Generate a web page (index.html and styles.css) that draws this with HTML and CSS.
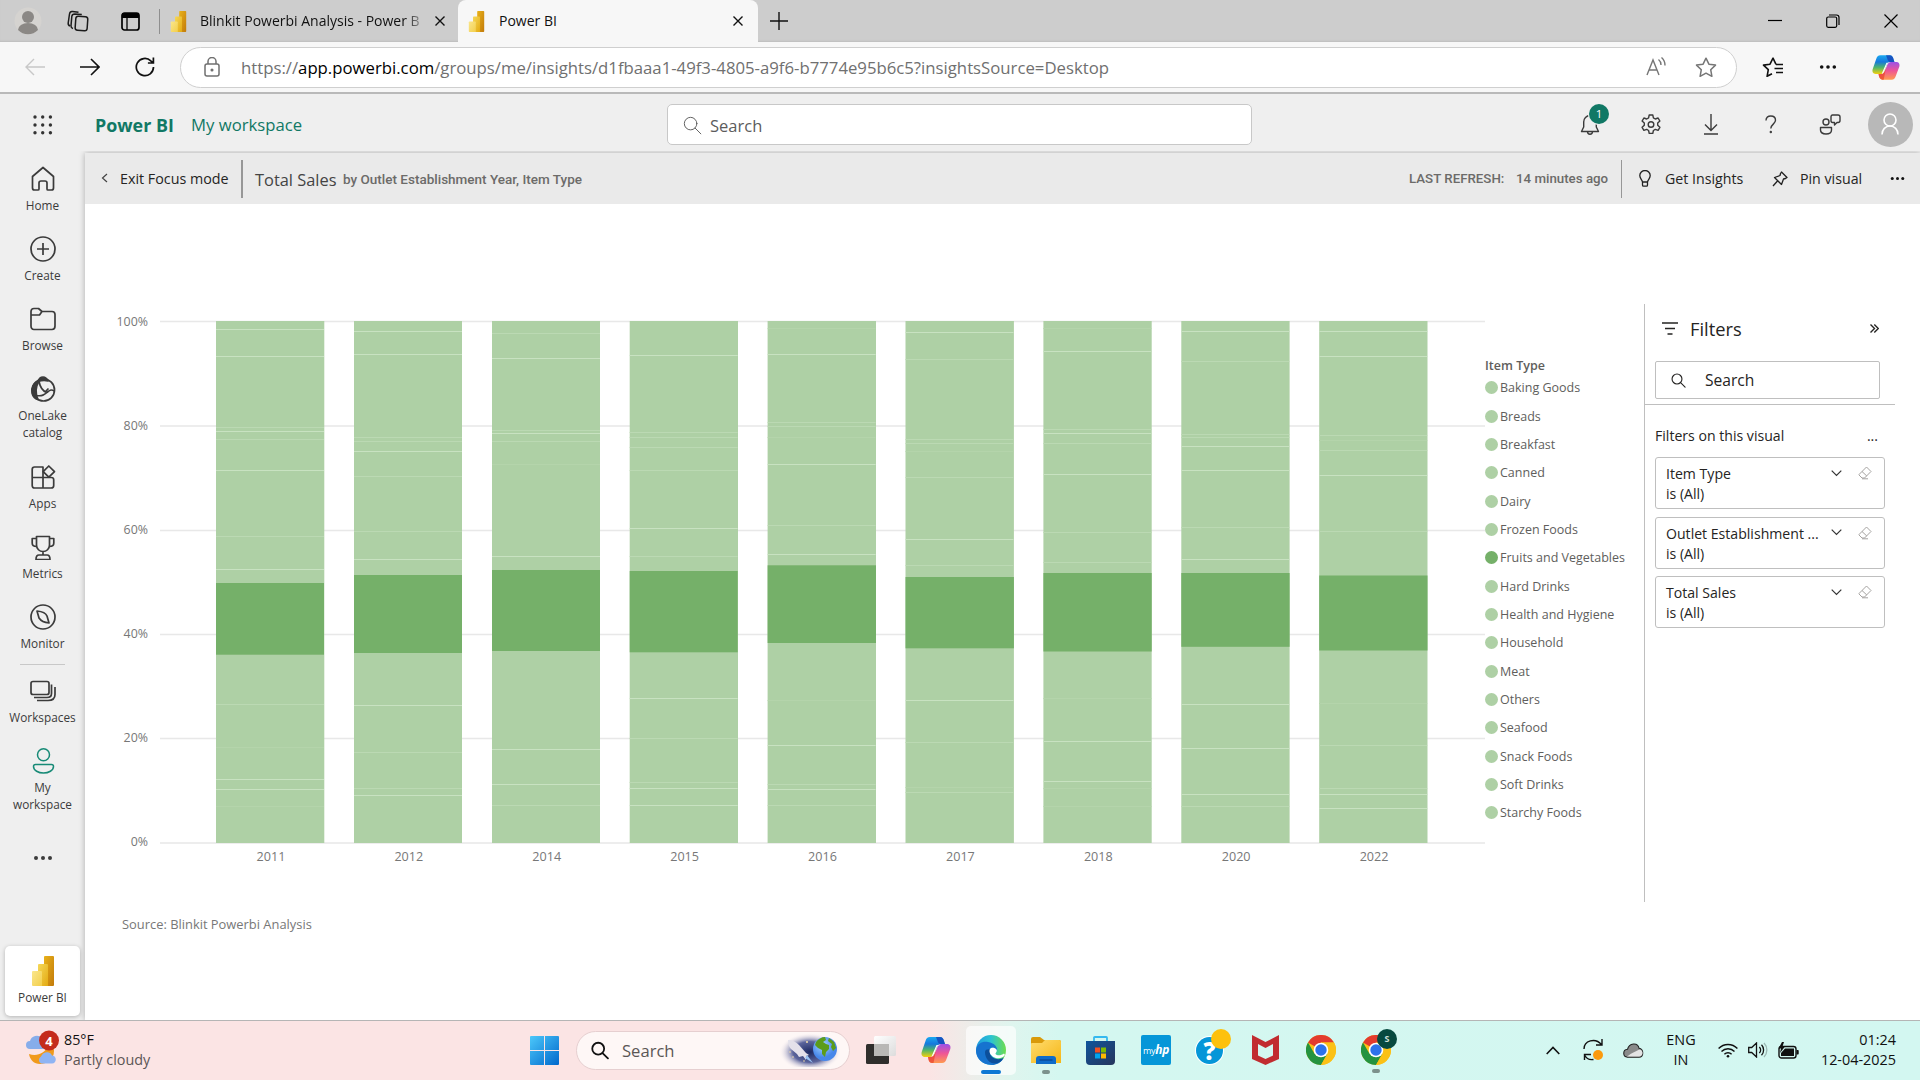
FILE: index.html
```html
<!DOCTYPE html>
<html lang="en">
<head>
<meta charset="utf-8">
<title>Power BI</title>
<link rel="stylesheet" href="styles.css">
</head>
<body>
<svg class="defs" width="0" height="0" aria-hidden="true">
  <defs>
    <linearGradient id="pb1" x1="0" y1="0" x2="1" y2="1"><stop offset="0" stop-color="#e9b21a"/><stop offset="1" stop-color="#c27a0a"/></linearGradient>
    <linearGradient id="pb2" x1="0" y1="0" x2="1" y2="1"><stop offset="0" stop-color="#f6d858"/><stop offset="1" stop-color="#e3aa12"/></linearGradient>
    <linearGradient id="pb3" x1="0" y1="0" x2="1" y2="1"><stop offset="0" stop-color="#fae68c"/><stop offset="1" stop-color="#f3cf4c"/></linearGradient>
    <linearGradient id="cpA" x1="0" y1="0" x2="0" y2="1"><stop offset="0" stop-color="#1ba9f0"/><stop offset=".35" stop-color="#1678dc"/><stop offset=".65" stop-color="#4fb56a"/><stop offset="1" stop-color="#f5d00c"/></linearGradient>
    <linearGradient id="cpB" x1="0" y1="0" x2="0" y2="1"><stop offset="0" stop-color="#9a50e8"/><stop offset=".5" stop-color="#ef5596"/><stop offset="1" stop-color="#ff9a50"/></linearGradient>
    <linearGradient id="edA" x1="0" y1="0" x2="1" y2="0"><stop offset="0" stop-color="#1f9be0"/><stop offset=".5" stop-color="#2bc3d2"/><stop offset="1" stop-color="#6ddd4e"/></linearGradient>
    <linearGradient id="winG" x1="0" y1="0" x2="1" y2="1"><stop offset="0" stop-color="#4cc8fa"/><stop offset="1" stop-color="#0068cc"/></linearGradient>
    <linearGradient id="foG" x1="0" y1="0" x2="1" y2="1"><stop offset="0" stop-color="#ffdc6e"/><stop offset="1" stop-color="#f5b616"/></linearGradient>
    <linearGradient id="stG" x1="0" y1="0" x2="1" y2="1"><stop offset="0" stop-color="#0f559c"/><stop offset="1" stop-color="#27355c"/></linearGradient>
    <linearGradient id="tvG" x1="0" y1="0" x2="1" y2="1"><stop offset="0" stop-color="#fff"/><stop offset="1" stop-color="#dcdcdc"/></linearGradient>
    <radialGradient id="spG"><stop offset="0" stop-color="#1d2a63"/><stop offset=".55" stop-color="#5c659c"/><stop offset="1" stop-color="#fff6f6" stop-opacity="0"/></radialGradient>
    <radialGradient id="earth" cx=".4" cy=".35"><stop offset="0" stop-color="#a9d8ff"/><stop offset="1" stop-color="#4787ea"/></radialGradient>
    <symbol id="pbi" viewBox="0 0 22 30"><path fill="url(#pb1)" d="M13 0h8a1 1 0 0 1 1 1v28a1 1 0 0 1-1 1h-9V1a1 1 0 0 1 1-1z"/><path fill="url(#pb2)" d="M7 8h8a1 1 0 0 1 1 1v21H6V9a1 1 0 0 1 1-1z"/><path fill="url(#pb3)" d="M1 15h8a1 1 0 0 1 1 1v14H1a1 1 0 0 1-1-1V16a1 1 0 0 1 1-1z"/></symbol>
    <symbol id="copilot" viewBox="0 0 30 28"><path fill="url(#cpA)" d="M9 1h10c2.500 0 3.500 2 4 4l1 3h-4c-2.500 0-3.500 1.500-4 3l-3 7c-.8 2-2 3-4 3H4c-3 0-4-2.500-3.300-5L4.500 5C5.200 2.500 6.500 1 9 1z"/><path fill="#1744b8" d="M15 1h4c2.500 0 3.500 2 4 4l1 3h-4c-2 0-3-1-3.500-3z" opacity=".8"/><path fill="url(#cpB)" d="M21 27H11c-2 0-3-1.500-3.500-3.500L7 21h2.500c2 0 3.200-1 4-3l3-7c.6-1.500 1.500-3 4-3H26c3 0 4 2.500 3.300 5l-3.800 10c-.8 2.500-2 4-4.500 4z"/><path fill="#e9452f" d="M7 21h2.500c2 0 3.200-1 4-3l1.500-3.500L12.500 27H11c-2 0-3-1.500-3.500-3.500z" opacity=".75"/><path fill="#fff" d="M15.500 9h4c-2.500 0-3.300 1-4 3l-2.500 6c-.6 1.300-1 2-2 2.500h-.5z"/></symbol>
    <symbol id="mag" viewBox="0 0 20 20"><g fill="none" stroke="currentColor" stroke-linecap="round"><circle cx="8" cy="8" r="6.600"/><path d="M12.800 12.800l6 6"/></g></symbol>
    <symbol id="eraser" viewBox="0 0 14 14"><g fill="none" stroke="#a5a3a1" stroke-linejoin="round"><path d="M8.500 1L13 5.500 6.500 12H4L1 9V8.500zM4 5.500L8.800 10M4 12.800h6"/></g></symbol>
    <symbol id="chrome" viewBox="0 0 30 30"><circle cx="15" cy="15" r="15" fill="#fbc116"/><path fill="#e33b2e" d="M15 15L2 7.500A15 15 0 0 1 28 7.500H15z"/><path fill="#24933f" d="M2 7.500A15 15 0 0 0 15 30l6.500-11.500L15 15 8.500 18.700z"/><path fill="#fbc116" d="M15 7.500h13A15 15 0 0 1 15 30l6.500-11.300z"/><circle cx="15" cy="15" r="7.300" fill="#fff"/><circle cx="15" cy="15" r="5.700" fill="#2d72ea"/></symbol>
    <symbol id="dots" viewBox="0 0 20 6"><g fill="currentColor"><circle cx="3" cy="3" r="2"/><circle cx="10" cy="3" r="2"/><circle cx="17" cy="3" r="2"/></g></symbol>
    <symbol id="x" viewBox="0 0 10 10"><path d="M.5.5l9 9M9.500.5l-9 9" fill="none" stroke="currentColor" stroke-width="1.400"/></symbol>
  </defs>
</svg>

<div class="tabstrip">
  <div class="strip-tools">
    <svg width="28" height="28" viewBox="0 0 28 28"><circle cx="14" cy="14" r="13.500" fill="#d5d3d0"/><circle cx="14" cy="10" r="6" fill="#8b8885"/><path d="M4 23a10 7 0 0 1 20 0 14 14 0 0 1-20 0z" fill="#8b8885"/></svg>
    <svg width="22" height="22" viewBox="0 0 22 22" fill="none" stroke="#1b1b1b" stroke-width="1.500"><rect x="8.500" y="6.500" width="12" height="14" rx="2.500" transform="rotate(4 14 13)"/><path d="M6 18.500c-1.500-.3-2-1-2-2.500l.8-9.500c.2-1.800 1.200-2.500 3-2.500l7 .5M3 16c-1.300-.5-2-1.500-1.800-3L2.500 4c.3-1.800 1.500-2.700 3-2.500l6 .7"/></svg>
    <svg width="19" height="19" viewBox="0 0 19 19"><rect x="1" y="1" width="17" height="17" rx="2.500" fill="none" stroke="#000" stroke-width="1.700"/><path d="M1 1h17v5H1z"/><path d="M6 5v13" stroke="#000" stroke-width="1.300"/></svg>
    <i class="strip-div"></i>
  </div>
  <div class="tab">
    <svg class="fav" width="19" height="21"><use href="#pbi"/></svg>
    <span class="tab-title fade">Blinkit Powerbi Analysis - Power B</span>
    <svg width="10" height="10"><use href="#x"/></svg>
  </div>
  <div class="tab active">
    <svg class="fav" width="19" height="21"><use href="#pbi"/></svg>
    <span class="tab-title">Power BI</span>
    <svg width="10" height="10"><use href="#x"/></svg>
  </div>
  <svg class="newtab" width="18" height="18" viewBox="0 0 18 18"><path d="M9 0v18M0 9h18" stroke="#111" stroke-width="1.400"/></svg>
  <div class="winctl">
    <svg width="14" height="14" viewBox="0 0 14 14"><path d="M0 6.500h14" stroke="#000" stroke-width="1.200"/></svg>
    <svg width="14" height="14" viewBox="0 0 14 14" fill="none" stroke="#000" stroke-width="1.200"><rect x=".7" y="3" width="10" height="10.300" rx="1.500"/><path d="M3 1h7.500c1.500 0 2.500 1 2.500 2.500V11"/></svg>
    <svg width="14" height="14" viewBox="0 0 14 14"><path d="M.5.5l13 13M13.500.5l-13 13" stroke="#000" stroke-width="1.200"/></svg>
  </div>
</div>

<div class="toolbar">
  <svg width="20" height="18" viewBox="0 0 20 18" fill="none" stroke="#c8c8c8" stroke-width="1.400"><path d="M20 9H1M9 1L1 9l8 8"/></svg>
  <svg width="20" height="18" viewBox="0 0 20 18" fill="none" stroke="#111" stroke-width="1.600"><path d="M0 9h19M11 1l8 8-8 8"/></svg>
  <svg width="20" height="20" viewBox="0 0 20 20" fill="none" stroke="#111" stroke-width="1.700"><path d="M18.500 10a8.600 8.600 0 1 1-2.700-6.200L18.300 6M18.400.5V6h-5.500"/></svg>
  <div class="address">
    <svg width="16" height="20" viewBox="0 0 16 20" fill="none" stroke="#707070" stroke-width="1.500"><rect x="1" y="7" width="14" height="12" rx="2"/><path d="M4 7V4.500a4 4 0 0 1 8 0V7"/><circle cx="8" cy="13" r=".8" fill="#707070"/></svg>
    <span class="url">https://<b>app.powerbi.com</b>/groups/me/insights/d1fbaaa1-49f3-4805-a9f6-b7774e95b6c5?insightsSource=Desktop</span>
    <svg width="20" height="20" viewBox="0 0 20 20" fill="none" stroke="#767676" stroke-width="1.400"><path d="M1 18L7 3l6 15M3 13h8M12.500 2.500c2 1.500 2.500 3.500 2.500 5.500M15.500.5c2.500 2 3.500 5 3.500 8"/></svg>
    <svg width="22" height="21" viewBox="0 0 22 21" fill="none" stroke="#767676" stroke-width="1.500" stroke-linejoin="round"><path d="M11 1.200l2.900 6 6.600.9-4.800 4.600 1.200 6.600L11 16.200l-5.900 3.100 1.200-6.600L1.500 8.100l6.600-.9z"/></svg>
  </div>
  <svg width="22" height="21" viewBox="0 0 22 21" fill="none" stroke="#111" stroke-width="1.600" stroke-linejoin="round"><path d="M14 7.300l-3-6.100-3 6-6.500.9 4.800 4.600-1.200 6.600 4.900-2.600M12.500 11.500H21M14 15.500h7M14 7.500h7"/></svg>
  <svg class="dk" width="18" height="6"><use href="#dots"/></svg>
  <svg width="28" height="27"><use href="#copilot"/></svg>
</div>

<div class="appheader">
  <svg class="waffle" width="20" height="20" viewBox="0 0 20 20" fill="#333"><circle cx="2" cy="2" r="1.700"/><circle cx="9.700" cy="2" r="1.700"/><circle cx="17.400" cy="2" r="1.700"/><circle cx="2" cy="10" r="1.700"/><circle cx="9.700" cy="10" r="1.700"/><circle cx="17.400" cy="10" r="1.700"/><circle cx="2" cy="17.700" r="1.700"/><circle cx="9.700" cy="17.700" r="1.700"/><circle cx="17.400" cy="17.700" r="1.700"/></svg>
  <span class="brand">Power BI</span>
  <span class="crumb">My workspace</span>
  <div class="hsearch"><svg width="19" height="19"><use href="#mag"/></svg><span>Search</span></div>
  <div class="bell">
    <svg width="20" height="22" viewBox="0 0 20 22" fill="none" stroke="#3b3b3b" stroke-width="1.400" stroke-linejoin="round"><path d="M10 1.500A6.300 6.300 0 0 0 3.700 8v5L1.500 17.500h17L16.300 13V8A6.300 6.300 0 0 0 10 1.500zM7.500 17.500a2.500 2.700 0 0 0 5 0"/></svg>
    <span class="badge">1</span>
  </div>
  <svg width="22" height="22" viewBox="0 0 22 22" fill="none" stroke="#3b3b3b" stroke-width="1.400" stroke-linejoin="round"><path d="M9.200 1h3.600l.6 2.900 1.900 1.100 2.800-1 1.800 3.100-2.200 2v2.200l2.200 2-1.800 3.100-2.800-1-1.900 1.100-.6 2.900H9.200l-.6-2.900-1.900-1.100-2.800 1-1.800-3.100 2.200-2V9.100l-2.200-2L3.900 4l2.800 1 1.900-1.100z"/><circle cx="11" cy="10.500" r="2.800"/></svg>
  <svg width="16" height="21" viewBox="0 0 16 21" fill="none" stroke="#3b3b3b" stroke-width="1.400"><path d="M8 0v16M2 10.500l6 6 6-6M1 20h14"/></svg>
  <svg width="12" height="19" viewBox="0 0 12 19" fill="none" stroke="#3b3b3b" stroke-width="1.400"><path d="M1 5.500c0-3 2-4.500 4.800-4.500s4.700 1.800 4.700 4.300c0 3.700-4.700 4-4.700 8.200"/><circle cx="5.800" cy="17" r=".5" fill="#3b3b3b"/></svg>
  <svg width="22" height="21" viewBox="0 0 22 21" fill="none" stroke="#3b3b3b" stroke-width="1.400" stroke-linejoin="round"><circle cx="7" cy="8" r="3"/><path d="M1.500 13.500h11v2.500c0 2.500-2.500 4-5.500 4s-5.500-1.500-5.500-4zM13.500 1h5.500a2 2 0 0 1 2 2v3.500a2 2 0 0 1-2 2h-1L15.500 11V8.500h-2c-1 0-1.500-1-1.500-2V3c0-1 .5-2 1.500-2z"/></svg>
  <svg width="45" height="45" viewBox="0 0 45 45"><circle cx="22.500" cy="22.500" r="22.500" fill="#b8b8b8"/><g fill="none" stroke="#fff" stroke-width="1.600"><circle cx="22" cy="18" r="6"/><path d="M14 32.500c0-5 3.500-8.500 8-8.500s8 3.500 8 8.500"/></g></svg>
</div>

<div class="main">
  <nav class="rail">
    <div class="ritem"><svg width="26" height="26" viewBox="0 0 26 26"><path d="M2.500 10.500L13 1.500l10.500 9V22c0 1-.8 2-2 2H18c-.8 0-1-.5-1-1v-6c0-1-.7-2-2-2h-4c-1.300 0-2 1-2 2v6c0 .5-.2 1-1 1H4.500c-1.200 0-2-1-2-2z"/></svg><span>Home</span></div>
    <div class="ritem"><svg width="26" height="26" viewBox="0 0 26 26"><circle cx="13" cy="13" r="12"/><path d="M13 7v12M7 13h12"/></svg><span>Create</span></div>
    <div class="ritem"><svg width="26" height="26" viewBox="0 0 26 26"><path d="M1 5.500C1 3.500 2 2.500 4 2.500h4.500L12 5.500h10c2 0 3 1.200 3 3V20c0 2-1 3.500-3 3.500H4c-2 0-3-1.500-3-3.500zM1 9h8.500L12 5.500"/></svg><span>Browse</span></div>
    <div class="ritem two"><svg width="26" height="26" viewBox="0 0 26 26"><circle cx="13.500" cy="14" r="11"/><path d="M9 5C3 7 1 12 2 17c1 4 4 6 6 6.500C5 17 6 10 9 5z" fill="#3b3b3b"/><path d="M8 5.500C9 2 11 1 13 1s4 1.500 5 4c-3-1-7-.5-10 .5z" fill="#3b3b3b"/><path d="M9 5.500c1 5 3 9 7.500 11M6.500 19.500c6 1 8-1 11-3.500s4-2.500 7-1M15.500 15.500l3-3"/></svg><span>OneLake<br>catalog</span></div>
    <div class="ritem"><svg width="26" height="26" viewBox="0 0 26 26"><path d="M4.500 3h8.500v21H4.500C3 24 2.200 23 2.200 21.500v-16C2.200 4 3 3 4.500 3zM2.200 13.500h19c1.500 0 2.500.8 2.500 2.300v5.700c0 1.500-1 2.500-2.500 2.500H13"/><path d="M18.800 2l5.700 5.600-5.700 5.600-5.600-5.600z"/></svg><span>Apps</span></div>
    <div class="ritem"><svg width="26" height="26" viewBox="0 0 26 26"><path d="M6.500 2.500h13V11c0 4-3 6.500-6.500 6.500S6.500 15 6.500 11zM6.500 4.500H2.200V9c0 2.500 2 3.500 4.300 3.500M19.500 4.500h4.300V9c0 2.500-2 3.500-4.300 3.500M13 17.500V21M6 25.500c0-3 1-4.500 3-4.500h8c2 0 3 1.500 3 4.500z"/></svg><span>Metrics</span></div>
    <div class="ritem"><svg width="26" height="26" viewBox="0 0 26 26"><circle cx="13" cy="13" r="12"/><path d="M7 7c5 .5 9 2.500 10 5l2 7c-5-.5-8-2-10-5z"/></svg><span>Monitor</span></div>
    <i class="rail-div"></i>
    <div class="ritem"><svg width="26" height="26" viewBox="0 0 26 26"><rect x="1" y="3.500" width="18" height="13" rx="2"/><path d="M4 19.500h13c3.500 0 4.500-1.500 4.500-4V6.500M7 22.500h11c5 0 7-2 7-6V9"/></svg><span>Workspaces</span></div>
    <div class="ritem two green"><svg width="26" height="26" viewBox="0 0 26 26"><circle cx="13.500" cy="6.800" r="6"/><path d="M3.500 18.500c0-1.200.8-2 2-2h16c1.200 0 2 .8 2 2 0 4-5 6.500-10 6.500s-10-2.500-10-6.500z"/></svg><span>My<br>workspace</span></div>
    <svg class="rail-more" width="22" height="6"><use href="#dots"/></svg>
    <div class="rail-card"><svg width="22" height="30"><use href="#pbi"/></svg><span>Power BI</span></div>
  </nav>

  <section class="content">
    <div class="focusbar">
      <svg width="7" height="10" viewBox="0 0 7 10"><path d="M6 1L1.500 5 6 9" fill="none" stroke="#444" stroke-width="1.200"/></svg>
      <span class="exit">Exit Focus mode</span>
      <i class="fdiv wide"></i>
      <span class="vtitle">Total Sales</span>
      <span class="vsub">by Outlet Establishment Year, Item Type</span>
      <span class="din">LAST REFRESH:</span>
      <span class="din">14 minutes ago</span>
      <i class="fdiv"></i>
      <svg width="12" height="17" viewBox="0 0 12 17" fill="none" stroke="#222" stroke-width="1.300"><path d="M3.500 12C3 9.500.8 8.500.8 5.500a5.200 5 0 0 1 10.400 0C11.200 8.500 9 9.500 8.500 12zM3.500 12v3c0 .7.500 1.200 1 1.200h3c.5 0 1-.5 1-1.200v-3"/></svg>
      <span class="act">Get Insights</span>
      <svg width="16" height="16" viewBox="0 0 16 16" fill="none" stroke="#222" stroke-width="1.300" stroke-linejoin="round"><path d="M9.500 1L15 6.500 13.500 7.500 11.500 8 9.500 13.500 2.500 6.500 8 4.500 8.500 2.500zM5.500 10L1 15"/></svg>
      <span class="act">Pin visual</span>
      <svg class="dk" width="15" height="5"><use href="#dots"/></svg>
    </div>

    <div class="canvas">
      <div class="visual">
        <div class="plot">
          <div class="yaxis"><span>100%</span><span>80%</span><span>60%</span><span>40%</span><span>20%</span><span>0%</span></div>
          <svg class="bars" width="1325" height="540" viewBox="160 0 1325 540">
            <path class="grid" d="M160 11.500h1325M160 116h1325M160 220.500h1325M160 324.500h1325M160 428.500h1325M160 533h1325"/>
            <g class="bar" transform="translate(216)"><rect class="lt" y="11" width="108.300" height="522"/><rect class="dk2" y="273" width="108" height="71.700"/><path class="s" d="M0 19.500h108M0 46.500h108M0 121.500h108M0 160.500h108M0 259.500h108M0 469.500h108M0 479.500h108"/><path class="f" d="M0 117.500h108M0 129.500h108M0 226.500h108M0 394.500h108"/><path class="v" d="M0 437.500h108M0 496.500h108"/></g>
            <g class="bar" transform="translate(354)"><rect class="lt" y="11" width="108" height="522"/><rect class="dk2" y="265" width="108" height="78"/><path class="s" d="M0 21.500h108M0 44.500h108M0 141.500h108M0 249.500h108M0 395.500h108M0 485.500h108"/><path class="f" d="M0 127.500h108M0 131.500h108M0 166.500h108M0 221.500h108M0 442.500h108M0 478.500h108"/></g>
            <g class="bar" transform="translate(492)"><rect class="lt" y="11" width="108" height="522"/><rect class="dk2" y="260" width="108" height="81"/><path class="s" d="M0 48.500h108M0 123.500h108M0 246.500h108M0 439.500h108M0 474.500h108"/><path class="f" d="M0 23.500h108M0 120.500h108M0 131.500h108M0 495.500h108"/><path class="v" d="M0 154.500h108"/></g>
            <g class="bar" transform="translate(629.700)"><rect class="lt" y="11" width="108.300" height="522"/><rect class="dk2" y="261" width="108" height="81.300"/><path class="s" d="M0 45.500h108M0 218.500h108M0 388.500h108M0 478.500h108M0 495.500h108"/><path class="f" d="M0 122.500h108M0 127.500h108M0 137.500h108M0 160.500h108M0 246.500h108M0 428.500h108M0 472.500h108"/></g>
            <g class="bar" transform="translate(767.600)"><rect class="lt" y="11" width="108.400" height="522"/><rect class="dk2" y="255.300" width="108.400" height="77.700"/><path class="s" d="M0 44.500h108M0 154.500h108M0 244.500h108M0 435.500h108M0 479.500h108"/><path class="f" d="M0 112.500h108M0 116.500h108M0 215.500h108M0 474.500h108M0 495.500h108"/><path class="v" d="M0 18.500h108M0 127.500h108M0 390.500h108"/></g>
            <g class="bar" transform="translate(905.500)"><rect class="lt" y="11" width="108.400" height="522"/><rect class="dk2" y="267" width="108.400" height="71.300"/><path class="s" d="M0 22.500h108M0 229.500h108M0 390.500h108"/><path class="f" d="M0 49.500h108M0 129.500h108M0 133.500h108M0 167.500h108M0 255.500h108M0 432.500h108M0 482.500h108"/><path class="v" d="M0 141.500h108M0 477.500h108"/></g>
            <g class="bar" transform="translate(1043.400)"><rect class="lt" y="11" width="108.300" height="522"/><rect class="dk2" y="263" width="108.300" height="78.500"/><path class="s" d="M0 41.500h108M0 123.500h108M0 164.500h108M0 431.500h108M0 471.500h108"/><path class="f" d="M0 119.500h108M0 133.500h108M0 222.500h108M0 252.500h108"/><path class="v" d="M0 18.500h108M0 388.500h108M0 478.500h108M0 496.500h108"/></g>
            <g class="bar" transform="translate(1181.300)"><rect class="lt" y="11" width="108.300" height="522"/><rect class="dk2" y="263" width="108.300" height="73.800"/><path class="s" d="M0 21.500h108M0 136.500h108M0 160.500h108M0 249.500h108M0 394.500h108M0 438.500h108M0 484.500h108"/><path class="f" d="M0 51.500h108M0 124.500h108M0 127.500h108M0 217.500h108M0 496.500h108"/></g>
            <g class="bar" transform="translate(1319.200)"><rect class="lt" y="11" width="108.300" height="522"/><rect class="dk2" y="265.500" width="108.300" height="75"/><path class="s" d="M0 21.500h108M0 46.500h108M0 165.500h108M0 484.500h108M0 498.500h108"/><path class="f" d="M0 125.500h108M0 140.500h108M0 221.500h108M0 435.500h108M0 478.500h108"/><path class="v" d="M0 130.500h108M0 393.500h108"/></g>
          </svg>
          <div class="xaxis"><span>2011</span><span>2012</span><span>2014</span><span>2015</span><span>2016</span><span>2017</span><span>2018</span><span>2020</span><span>2022</span></div>
        </div>
        <div class="source">Source: Blinkit Powerbi Analysis</div>
      </div>
      <div class="legend">
        <div class="legend-title">Item Type</div>
        <ul>
          <li>Baking Goods</li><li>Breads</li><li>Breakfast</li><li>Canned</li><li>Dairy</li><li>Frozen Foods</li><li class="on">Fruits and Vegetables</li><li>Hard Drinks</li><li>Health and Hygiene</li><li>Household</li><li>Meat</li><li>Others</li><li>Seafood</li><li>Snack Foods</li><li>Soft Drinks</li><li>Starchy Foods</li>
        </ul>
      </div>
      <aside class="filters">
        <div class="fhead">
          <svg width="16" height="13" viewBox="0 0 16 13"><path d="M0 1h16M3 6.500h10M5.500 12h5" stroke="#252423" stroke-width="1.500"/></svg>
          <span>Filters</span>
          <svg width="9" height="9" viewBox="0 0 9 9"><path d="M.5.5l4 4-4 4M4.300.5l4 4-4 4" fill="none" stroke="#252423" stroke-width="1.400"/></svg>
        </div>
        <div class="fsearch"><svg width="15" height="15"><use href="#mag"/></svg><span>Search</span></div>
        <div class="fsection"><span>Filters on this visual</span><span>...</span></div>
        <div class="fcard"><span>Item Type</span><svg width="11" height="7" viewBox="0 0 11 7"><path d="M.7.7l4.800 4.800L10.300.7" fill="none" stroke="#333" stroke-width="1.200"/></svg><svg width="14" height="14"><use href="#eraser"/></svg><span>is (All)</span></div>
        <div class="fcard"><span>Outlet Establishment ...</span><svg width="11" height="7" viewBox="0 0 11 7"><path d="M.7.7l4.800 4.800L10.300.7" fill="none" stroke="#333" stroke-width="1.200"/></svg><svg width="14" height="14"><use href="#eraser"/></svg><span>is (All)</span></div>
        <div class="fcard"><span>Total Sales</span><svg width="11" height="7" viewBox="0 0 11 7"><path d="M.7.7l4.800 4.800L10.300.7" fill="none" stroke="#333" stroke-width="1.200"/></svg><svg width="14" height="14"><use href="#eraser"/></svg><span>is (All)</span></div>
      </aside>
    </div>
  </section>
</div>

<footer class="taskbar">
  <div class="weather">
    <svg width="36" height="36" viewBox="0 0 36 36"><path d="M4 24c8 3 16-1 19-8 4 0 6 1 6 5 0 9-8 13-14 13S5 30 4 24z" fill="#f09a1c"/><path d="M5 19a4 4 0 0 1 0-8 7 7 0 0 1 12-3l2 11z" fill="#86adea"/><path d="M16 33.500a4 4 0 0 1 0-7c2-5 9-6 11-1 5 0 5 8 0 8z" fill="#8fb4f3"/><circle cx="24" cy="10.500" r="10" fill="#c42b1c"/></svg>
    <b class="wbadge">4</b>
    <div><div class="temp">85°F</div><div class="cond">Partly cloudy</div></div>
  </div>
  <div class="apps">
    <svg width="29" height="29" viewBox="0 0 29 29" fill="url(#winG)"><path d="M0 1q0-1 1-1h13v14H0zM15 0h13q1 0 1 1v13H15zM0 15h14v14H1q-1 0-1-1zM15 15h14v13q0 1-1 1H15z"/></svg>
    <div class="tsearch">
      <svg width="18" height="19"><use href="#mag"/></svg><span>Search</span>
      <svg width="62" height="34" viewBox="0 0 62 34"><ellipse cx="31" cy="19" rx="31" ry="19" fill="url(#spG)"/><circle cx="46" cy="16" r="12" fill="url(#earth)"/><path d="M37 9c2-3 6-5 9-5l1 3-3 2 3 2 3 1 0 4-3 3-1 5-3-3 0-4-4-2-3-3zM50 5l5 4 2 6-3 3-2-4 1-3-4-3z" fill="#5c9c1a"/><path d="M9 7c5 0 8 2 11 5l7 8 3 2-3 1 0 4-3-4-4 1-2-3-6-5c-2-2-3-5-3-9z" fill="#e4e1ea"/><path d="M28 22l6 8-8-5z" fill="#9bc4f5"/><g fill="#f4dfa8"><circle cx="28" cy="9" r="1"/><circle cx="14" cy="24" r=".8"/><circle cx="11" cy="19" r=".8"/><circle cx="25" cy="28" r=".8"/></g></svg>
    </div>
    <svg width="30" height="28" viewBox="0 0 30 28"><rect y="8" width="23" height="20" rx="1.500" fill="#2f2e2c"/><rect x="8" width="22" height="20" rx="1.500" fill="url(#tvG)"/><path d="M8 8h15v12H8z" fill="#b9b8b6"/></svg>
    <svg width="30" height="28"><use href="#copilot"/></svg>
    <div class="tile"><svg width="30" height="30" viewBox="0 0 30 30"><circle cx="15" cy="15" r="15" fill="url(#edA)"/><path d="M0 15c1-7 7-9 12-8 7 1 10 6 9 9-1-3-4-4-6-3-4 2-4 8 0 11s9 2 12 0c-3 5-9 7-15 5.500C4 28 0 22 0 15z" fill="#1673cf"/><path d="M9 17c0 7 5 12 11 11.500 3-.5 6-2.500 8-6-4 2.500-8 2-11 0-3-2-3.500-5-2-8-3-.5-6 0-6 2.500z" fill="#0c4f9b"/><path d="M14 14c1.500-2 5-1.500 6.500.5 1 2-1 3-1 4.500 1.500 2 6 1.500 8.500-.5l1 1.500c-3 4-8 4-11.500 2-3-2-5-5-3.500-8z" fill="#fff"/></svg><i></i></div>
    <div class="run"><svg width="30" height="28" viewBox="0 0 30 28"><path d="M0 3q0-2 2-2h7l4 3h15q2 0 2 2v6H0z" fill="#d99a0b"/><path d="M0 8q0-1 1-1h10l3-3h14q2 0 2 2v21H0z" fill="url(#foG)"/><path d="M5 28v-5q0-3 3-3h14q3 0 3 3v5z" fill="#0f6cc9"/><path d="M8.500 24h13" stroke="#0a4694" stroke-width="1.300"/></svg><i></i></div>
    <svg width="29" height="29" viewBox="0 0 29 29"><path d="M8 5V1.800q0-.8.800-.8h11.400q.8 0 .8.800V5" fill="none" stroke="#35b9ef" stroke-width="1.800"/><path d="M0 5h29v20q0 4-4 4H4q-4 0-4-4z" fill="url(#stG)"/><path d="M9 11.500h5v5H9z" fill="#f25022"/><path d="M15 11.500h5v5h-5z" fill="#7fba00"/><path d="M9 17.500h5v5H9z" fill="#00a4ef"/><path d="M15 17.500h5v5h-5z" fill="#ffb900"/></svg>
    <div class="hp">my<b>hp</b></div>
    <div class="help"><span>?</span><i></i></div>
    <svg width="27" height="30" viewBox="0 0 27 30"><path d="M0 0l13.500 7L27 0v24l-13.500 6L0 24zM6 9v11.500l7.500 3.500 7.500-3.500V9l-7.500 4z" fill="#c12c30" fill-rule="evenodd"/></svg>
    <svg width="30" height="30"><use href="#chrome"/></svg>
    <div class="run prof"><svg width="30" height="30"><use href="#chrome"/></svg><b>S</b><i></i></div>
  </div>
  <div class="tray">
    <svg width="14" height="9" viewBox="0 0 14 9"><path d="M.7 8L7 1.500 13.300 8" fill="none" stroke="#111" stroke-width="1.600"/></svg>
    <svg width="21" height="22" viewBox="0 0 21 22" fill="none" stroke="#111" stroke-width="1.400"><path d="M1 10C1 2 12-2 18.500 5.500M19 0v6h-6M1.500 21v-5.500H8M1.500 16c2 4 6 5 9 4.500"/><circle cx="15" cy="16" r="5" fill="#fb9a0e" stroke="none"/></svg>
    <svg width="21" height="15" viewBox="0 0 21 15"><path d="M4.500 14.200C-.5 14-.5 6.800 4.500 6.300 6-.5 15-.8 16 5.200c5 .8 5 8.800 0 9z" fill="#8a8a8a" stroke="#222" stroke-width="1.100"/><path d="M4 13.500c1-1 9-6 13-7 4 1.500 3 7-1 7z" fill="#e4e4e4"/></svg>
    <span class="lang">ENG<br>IN</span>
    <svg width="20" height="15" viewBox="0 0 20 15" fill="none" stroke="#111" stroke-width="1.400"><path d="M.6 5.500a13 13 0 0 1 18.800 0M3.500 8.500a9 9 0 0 1 13 0M6.400 11.300a5 5 0 0 1 7.200 0"/><circle cx="10" cy="13.300" r="1.300" fill="#111" stroke="none"/></svg>
    <svg width="20" height="16" viewBox="0 0 20 16" fill="none" stroke="#111" stroke-width="1.300"><path d="M.7 5.500h3L8.500 1v14l-4.800-4.500h-3zM11.300 5a4 4 0 0 1 0 6M13.500 2.800a7.500 7.500 0 0 1 0 10.400"/><path d="M16 1a10 10 0 0 1 0 14" stroke="#9cb8b3"/></svg>
    <svg width="21" height="17" viewBox="0 0 21 17"><rect x="1" y="4.500" width="17" height="11.500" rx="2.500" fill="none" stroke="#111" stroke-width="1.400"/><path d="M7 6.500h9v7.500H3v-3zM18.500 8H20q.7 0 .7.700v3q0 .8-.7.800h-1.500zM4 0L.5 6.500H3L2 11l5-6.500H4.500L6 0z" fill="#111"/></svg>
    <span class="clock">01:24<br>12-04-2025</span>
  </div>
</footer>
</body>
</html>
```
FILE: styles.css
```css
* { box-sizing: border-box; }
body { margin: 0; width: 1920px; height: 1080px; overflow: hidden; display: flex; flex-direction: column; font-family: "Open Sans", "Noto Sans", sans-serif; color: #252423; background: #fff; }
svg { display: block; flex: none; }
.defs { position: absolute; }
i { display: block; font-style: normal; }
span { white-space: nowrap; }
.dk { color: #111; }

/* browser tab strip */
.tabstrip { height: 42px; flex: none; background: #cdcdcd; display: flex; align-items: center; box-shadow: inset 0 -2px 2px -1px #bdbdbd; }
.strip-tools { display: grid; grid-template-columns: 53px 54px 38px 2px; align-items: center; padding-left: 14px; }
.strip-div { width: 1px; height: 25px; background: #8f8f8f; }
.tab { display: grid; grid-template-columns: 31px 235px 10px; align-items: center; width: 297px; height: 42px; padding-left: 8px; font-size: 14px; color: #111; }
.tab.active { width: 300px; padding-left: 9px; background: #f7f7f7; border-radius: 8px 8px 0 0; grid-template-columns: 32px 234px 10px; }
.tab-title { width: 222px; padding-bottom: 2px; }
.fade { -webkit-mask-image: linear-gradient(90deg, #000 205px, rgba(0,0,0,.15) 224px); mask-image: linear-gradient(90deg, #000 205px, rgba(0,0,0,.15) 224px); }
.newtab { margin-left: 12px; }
.winctl { margin-left: auto; display: flex; gap: 44px; padding-right: 22px; }

/* browser toolbar */
.toolbar { height: 52px; flex: none; background: #f7f7f7; border-bottom: 2px solid #b9b9b9; display: grid; grid-template-columns: 55px 55px 45px 1582px 57px 53px 28px; align-items: center; padding-left: 25px; }
.address { width: 1557px; height: 41px; border: 1px solid #cfcfcf; border-radius: 21px; background: #fff; display: grid; grid-template-columns: 37px 1405px 49px 22px; align-items: center; padding-left: 23px; }
.url { font-size: 16.740px; color: #707070; }
.url b { font-weight: 400; color: #000; }

/* app header */
.appheader { height: 59px; flex: none; background: #efefef; display: grid; grid-template-columns: 62px 96px 476px 913px 60px 63px 62px 54px 49px 45px; align-items: center; padding: 2px 0 0 33px; }
.brand { font-size: 17.900px; font-weight: 700; color: #117865; }
.crumb { font-size: 16.700px; color: #117865; }
.hsearch { width: 585px; height: 41px; border: 1px solid #c8c8c8; border-radius: 5px; background: #fff; display: flex; align-items: center; gap: 8px; padding: 1px 0 0 15px; font-size: 16.500px; color: #5c5c5c; }
.bell { position: relative; }
.badge { position: absolute; left: 9px; top: -10px; width: 20px; height: 20px; border-radius: 50%; background: #117865; color: #fff; font-size: 11.500px; line-height: 20px; text-align: center; box-shadow: 0 0 0 1px #efefef; }

.main { flex: 1; min-height: 0; display: flex; background: #efefef; }

/* navigation rail */
.rail { width: 85px; flex: none; display: flex; flex-direction: column; align-items: center; background: #efefef; padding-top: 13px; font-size: 11.800px; color: #3b3b3b; text-align: center; }
.ritem { height: 70px; flex: none; width: 85px; display: flex; flex-direction: column; align-items: center; gap: 5px; line-height: 17px; }
.ritem.two { height: 88px; }
.ritem svg { fill: none; stroke: #3b3b3b; stroke-width: 1.700; stroke-linejoin: round; }
.ritem.green svg { stroke: #178a76; stroke-width: 1.500; }
.rail-div { width: 45px; height: 1px; background: #c8c8c8; margin: -10px 0 13px; flex: none; }
.rail-more { margin-top: 19px; color: #3b3b3b; }
.rail-card { margin: auto 0 4px; width: 75px; height: 70px; flex: none; border-radius: 5px; background: #fff; box-shadow: 0 1px 4px rgba(0,0,0,.25); display: flex; flex-direction: column; align-items: center; gap: 3px; padding-top: 10px; }

/* report area */
.content { flex: 1; min-width: 0; background: #fff; box-shadow: 0 0 6px rgba(0,0,0,.28); clip-path: inset(-2px 0 0 -8px); display: flex; flex-direction: column; }
.focusbar { height: 51px; flex: none; background: #eaeaea; display: grid; grid-template-columns: 19px 121px 14px 88px 1066px 107px 105px 18px 26px 107px 28px 90px 15px; align-items: center; padding-left: 16px; }
.focusbar > svg:first-child { margin-bottom: 2px; }
.exit { font-size: 14.300px; padding-bottom: 1px; }
.act { font-size: 14.200px; }
.vtitle { font-size: 16.400px; color: #444; padding-top: 2px; }
.vsub { font: 500 13.500px Roboto, sans-serif; color: #6c6b69; }
.din { font: 500 13.300px Roboto, sans-serif; color: #6c6b69; }
.fdiv { width: 1px; height: 38px; background: #979797; }
.fdiv.wide { width: 2px; }
.canvas { flex: 1; display: grid; grid-template-columns: 1400px 159px 251px; align-items: start; padding-top: 100px; }

/* chart */
.visual { padding: 6px 0 0 15px; }
.plot { display: grid; grid-template-columns: 48px 1325px; column-gap: 12px; }
.yaxis { display: flex; flex-direction: column; justify-content: space-between; height: 541px; padding-top: 3px; margin-bottom: -1px; text-align: right; font-size: 12.400px; line-height: 18px; color: #777; }
.bars .grid { fill: none; stroke: #e8e8e8; stroke-width: 1.300; }
.lt { fill: #aed0a5; }
.dk2 { fill: #75b069; }
.bar path { fill: none; stroke: #c8e2c1; stroke-width: 1; }
.bar path.f { stroke: #bbd9b3; }
.bar path.v { stroke: #b4d4ab; }
.xaxis { grid-column: 2; display: flex; margin: -2px 0 0 42px; font-size: 12.600px; line-height: 18px; color: #777; }
.xaxis span { width: 137.900px; text-align: center; }
.source { margin: 48px 0 0 22px; font-size: 12.900px; line-height: 20px; color: #777; }
.legend { padding-top: 52px; font-size: 12.500px; color: #605e5c; }
.legend-title { font-weight: 600; line-height: 20px; }
.legend ul { list-style: none; margin: -2.500px 0 0; padding: 0; }
.legend li { height: 28.350px; display: flex; align-items: center; gap: 2px; white-space: nowrap; }
.legend li::before { content: ""; width: 13px; height: 13px; flex: none; border-radius: 50%; background: #aed0a5; }
.legend li.on::before { background: #75b069; }

/* filters pane */
.filters { height: 598px; border-left: 1px solid #bfbfbf; }
.fhead { height: 57px; display: grid; grid-template-columns: 28px 180px 9px; align-items: center; padding: 0 0 9px 17px; font-size: 18.300px; }
.fsearch { height: 38px; width: 225px; margin-left: 10px; border: 1px solid #bfbfbf; border-radius: 2px; display: flex; align-items: center; gap: 19px; padding-left: 15px; font-size: 15.600px; }
.fsearch svg { stroke-width: 1.500; }
.fsection { margin-top: 5px; padding: 21px 17px 0 10px; height: 53px; border-top: 1px solid #bfbfbf; display: flex; justify-content: space-between; font-size: 14.100px; line-height: 20px; }
.fcard { width: 230px; height: 52px; margin: 0 0 7.500px 10px; border: 1px solid #bfbfbf; border-radius: 3px; display: grid; grid-template-columns: 165px 27px 14px; grid-template-rows: 20px 20px; align-items: center; padding: 6px 0 0 10px; font-size: 14.100px; line-height: 20px; }
.fcard svg { margin-bottom: 2px; }

/* taskbar */
.taskbar { height: 60px; flex: none; border-top: 1px solid #b5b5b5; background: linear-gradient(90deg, #fbe4e4 0, #fbe4e4 930px, #dff5ee 1010px, #d4f7f0 1060px, #d3f7f1 100%); display: grid; grid-template-columns: 530px 1016px 1fr; align-items: center; padding-bottom: 1px; }
.weather { position: relative; display: flex; gap: 3px; padding-left: 25px; line-height: 20px; }
.wbadge { position: absolute; left: 39px; top: 1px; width: 20px; text-align: center; color: #fff; font-size: 13px; }
.temp { font-size: 14.300px; color: #111; }
.cond { font-size: 14.400px; color: #5c5656; }
.apps { display: grid; grid-template-columns: 46px 290px 55px 45px 65px 55px 55px 55px 56px 54px 55px 30px; align-items: center; }
.tsearch { width: 274px; height: 39px; border: 1px solid #e6cfd0; border-radius: 20px; background: #fef7f6; display: flex; align-items: center; padding-left: 14px; font-size: 16.600px; color: #5b5655; }
.tsearch svg:first-child { color: #111; stroke-width: 2; margin-right: 13px; }
.tsearch svg:last-child { margin-left: auto; margin-right: 8px; }
.tile { width: 50px; height: 49px; border-radius: 5px; background: rgba(255,255,255,.65); display: flex; align-items: center; justify-content: center; position: relative; }
.tile i { position: absolute; bottom: 1px; left: 15px; width: 20px; height: 4px; border-radius: 2px; background: #0f78d4; }
.run { position: relative; }
.run i { position: absolute; left: 11px; top: 34px; width: 8px; height: 4px; border-radius: 2px; background: #7c918c; }
.prof b { position: absolute; left: 16px; top: -6px; width: 20px; height: 20px; border-radius: 50%; background: #07493f; color: #cfe0dc; font-size: 9px; line-height: 20px; text-align: center; }
.hp { width: 30px; height: 30px; border-radius: 2px; background: #0596d8; color: #fff; font-size: 9px; line-height: 29px; text-align: center; letter-spacing: -.3px; }
.hp b { font-size: 12px; font-style: italic; }
.help { position: relative; width: 27px; height: 27px; border-radius: 50%; background: #0596d8; box-shadow: 0 0 0 1px #fff; color: #fff; font-size: 24px; font-weight: 800; line-height: 27px; text-align: center; }
.help i { position: absolute; left: 15px; top: -8px; width: 20px; height: 20px; border-radius: 50%; background: #fdc10d; }
.tray { display: grid; grid-template-columns: 37px 40px 31px 64px 30px 30px 21px 97px; align-items: center; font-size: 14.400px; line-height: 20px; color: #111; }
.lang { text-align: center; margin-right: 10px; }
.clock { text-align: right; }
```
